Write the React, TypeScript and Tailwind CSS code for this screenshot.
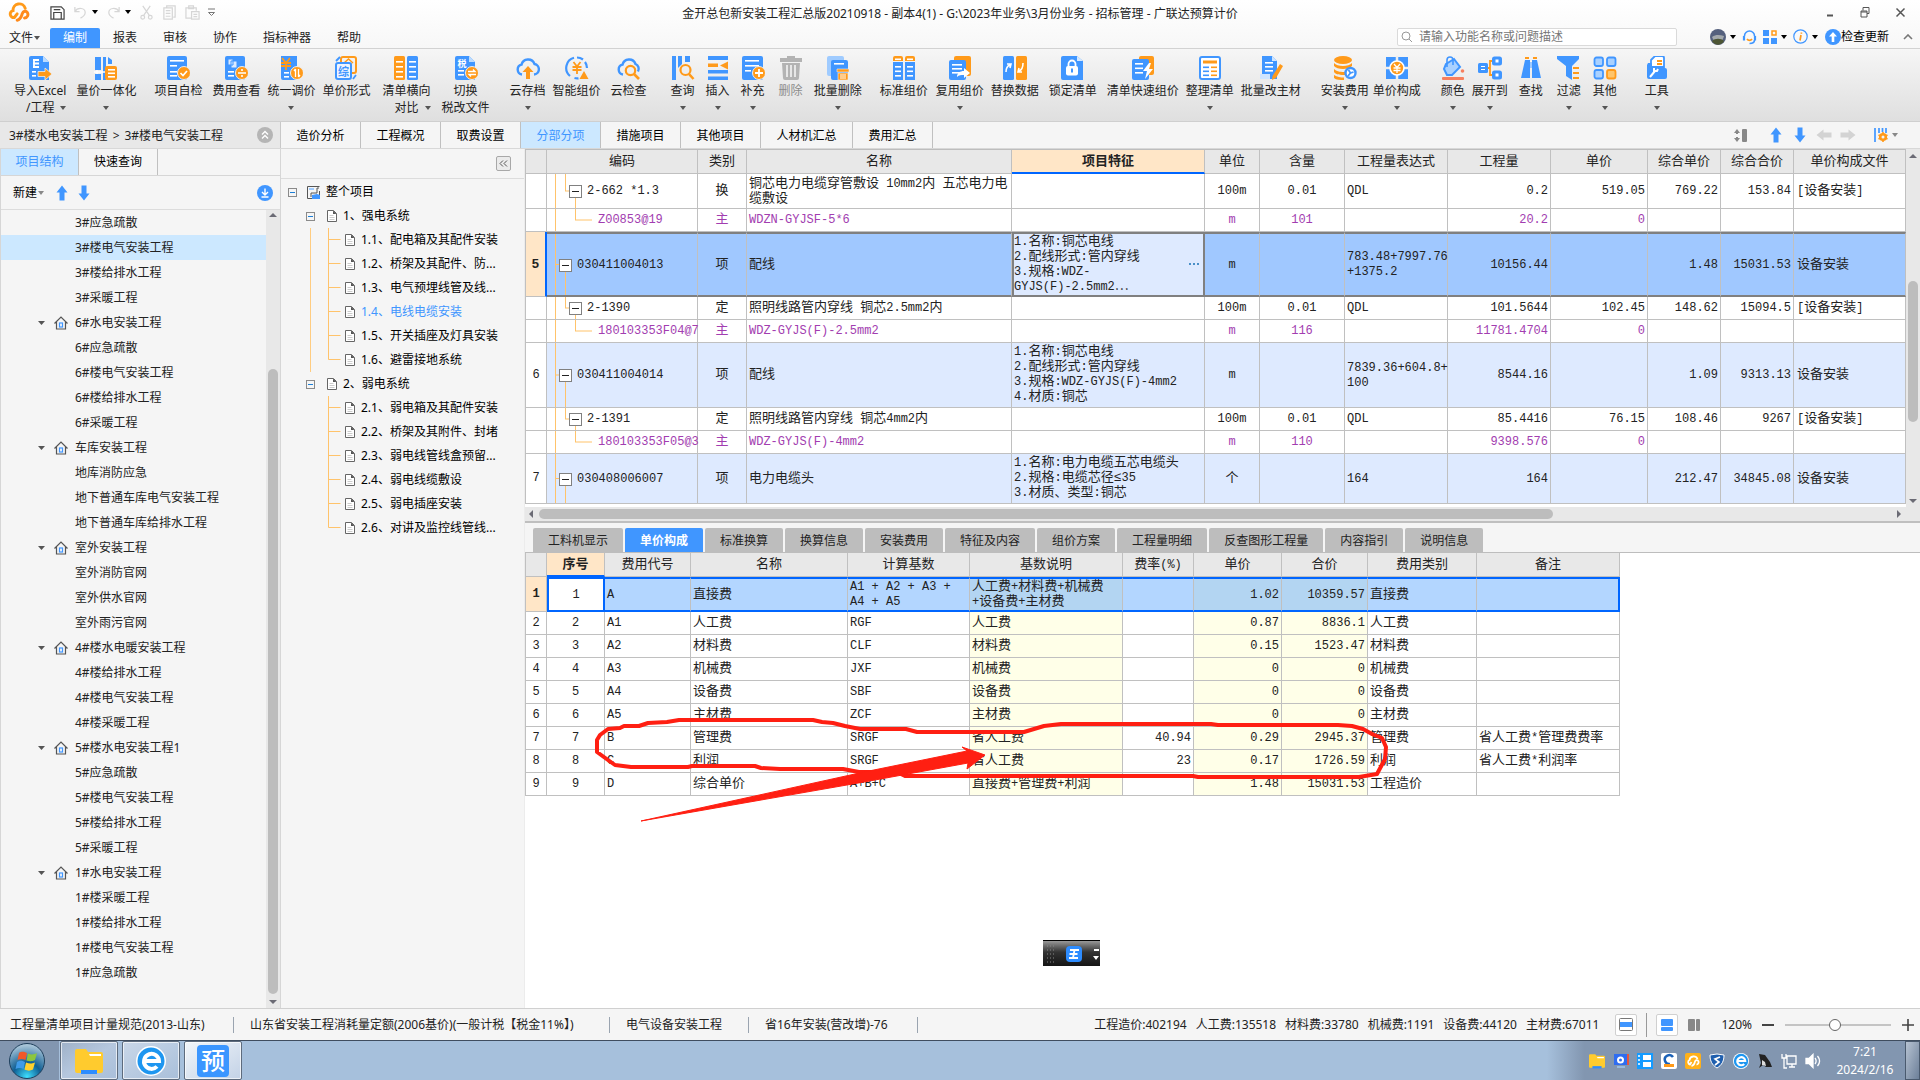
import type { ReactNode } from 'react';
import { useState } from 'react';

const B = '#4096ff';
const O = '#ff9a1a';

/* ---------- small helpers ---------- */

function Caret({ className = 'text-[#555]' }: { className?: string }) {
  return (
    <svg width="6" height="4" viewBox="0 0 6 4" className={`shrink-0 ${className}`}>
      <path d="M0 0h6L3 4z" fill="currentColor" />
    </svg>
  );
}

// grid text: half-width characters sit on a 7px raster, Chinese ones on 13px
function Cell({ text }: { text: string }) {
  return (
    <>
      {text.split(/([^\x00-\x7f]+)/).map((part, i) =>
        i % 2 ? (
          <span key={i} className="text-[13px] leading-none">
            {part}
          </span>
        ) : (
          part
        ),
      )}
    </>
  );
}

function Arrow({ dir, color = B, size = 16 }: { dir: 'up' | 'down' | 'left' | 'right'; color?: string; size?: number }) {
  const turn = { up: 0, right: 90, down: 180, left: 270 }[dir];
  return (
    <svg width={size} height={size} viewBox="0 0 16 16" className="shrink-0">
      <path d="M8 0.5l5.5 7h-3v8h-5v-8h-3z" fill={color} transform={`rotate(${turn} 8 8)`} />
    </svg>
  );
}

/* ---------- ribbon ---------- */

const coin = <circle cx="18" cy="17" r="6.5" fill={O} stroke="#eee" />;

const lines = (x: number, ys: number[], w: number, color = '#fff') =>
  ys.map((y) => <rect key={y} x={x} y={y} width={w} height="1.6" fill={color} />);

const icons: Record<string, ReactNode> = {
  excel: (
    <>
      <path d="M3 0h12l6 6v18H3a2 2 0 0 1-2-2V2a2 2 0 0 1 2-2z" fill={B} />
      <path d="M15 0l6 6h-6z" fill="#bcdcff" />
      <path d="M5 4h6M5 7.5h6M5 11h6M6 4v7" stroke="#fff" strokeWidth="1.8" />
      {lines(4, [15, 19], 4)}
      <path d="M10 15.5h7v-3.5l7 6-7 6v-3.500h-7z" fill={O} stroke="#eee" strokeWidth=".8" />
    </>
  ),
  integrate: (
    <>
      <path d="M1 1h6v13H1zM9 1h3v23H9zM1 18h6v6H1zM14 1l4 3v4h-4z" fill={B} />
      <path d="M0 16h11M3 14v4" stroke="#fff" strokeWidth="1.5" />
      <rect x="11" y="10" width="12" height="14" rx="2" fill={O} />
      {lines(14, [13, 16.5, 20], 7)}
    </>
  ),
  check: (
    <>
      <rect x="1" y="0" width="20" height="24" rx="2" fill={B} />
      {lines(4, [4], 14)}
      {lines(4, [9, 15, 19], 7)}
      {coin}
      <path d="M14.500 17l2.500 2.500 4-4.500" stroke="#fff" strokeWidth="1.700" fill="none" />
    </>
  ),
  feeView: (
    <>
      <rect x="1" y="0" width="20" height="24" rx="2" fill={B} />
      <path d="M4 3h5v6H4zM7 5h6v7H7z" fill="#dbeaff" stroke={B} />
      {lines(4, [15, 19], 6)}
      {coin}
      <path d="M14 17h8" stroke="#fff" strokeWidth="1.500" />
      <circle cx="18" cy="14" r="1.100" fill="#fff" />
      <circle cx="18" cy="20" r="1.100" fill="#fff" />
    </>
  ),
  adjust: (
    <>
      <path d="M2 0h16v24H4a2 2 0 0 1-2-2z" fill={B} />
      <path d="M3 2l4 5 4-5M2 7h10M2 10h10M7 7v7" stroke={O} strokeWidth="1.800" fill="none" />
      {lines(5, [16, 20], 5)}
      {coin}
      <path d="M16.500 13v8M15 15l1.500-2M19.500 21v-8M21 19l-1.500 2" stroke="#fff" strokeWidth="1.300" />
    </>
  ),
  priceForm: (
    <>
      <rect x="7" y="1" width="15" height="16" rx="2" fill="none" stroke={O} strokeWidth="2" />
      <path d="M10 7l4.500-4L19 7M11 8h7" stroke={O} strokeWidth="1.500" fill="none" />
      <rect x="2" y="7" width="15" height="16" rx="2" fill="#eef5ff" stroke={B} strokeWidth="2" />
      <text x="9.500" y="19.500" fontSize="11" fontWeight="700" textAnchor="middle" fill={B}>综</text>
      <path d="M2 5l4-4M19 23l3-4" stroke={B} strokeWidth="1.800" />
    </>
  ),
  compare: (
    <>
      <rect x="0" y="0" width="11" height="24" rx="1.500" fill={O} />
      <rect x="13" y="0" width="11" height="24" rx="1.500" fill={B} />
      {lines(2, [5, 10, 15, 20], 7)}
      {lines(15, [5, 10, 15, 20], 7)}
    </>
  ),
  tax: (
    <>
      <path d="M3 0h12l6 6v18H3a2 2 0 0 1-2-2V2a2 2 0 0 1 2-2z" fill={B} />
      <path d="M15 0l6 6h-6z" fill="#bcdcff" />
      <text x="8" y="10.500" fontSize="9" fontWeight="700" textAnchor="middle" fill="#fff">税</text>
      {lines(4, [14, 18], 6)}
      {coin}
      <path d="M14 15.500h7l-2-2M22 18.500h-7l2 2" stroke="#fff" strokeWidth="1.300" fill="none" />
    </>
  ),
  cloudSave: (
    <>
      <path d="M6 18.500a5 5 0 0 1-.5-9.800A6.800 6.800 0 0 1 18.500 8a5.300 5.300 0 0 1-.5 10.500" fill="none" stroke={B} strokeWidth="2.400" />
      <path d="M12 10l5.500 6H14v7h-4v-7H6.500z" fill={O} />
    </>
  ),
  smart: (
    <>
      <path d="M9 1.800a10.500 10.500 0 0 0-4 18.200M9.500 22a10 10 0 0 0 4 .3M12 1.500a10 10 0 0 1 6 2M20 6a10 10 0 0 1 2 6" fill="none" stroke={B} strokeWidth="2.200" />
      <path d="M8.500 6l3.500 4.500L15.500 6M7.500 11h9M7.500 14h9M12 11v7" stroke={O} strokeWidth="1.800" fill="none" />
      <path d="M19 15l4.500 8h-9z" fill={O} />
    </>
  ),
  cloudCheck: (
    <>
      <path d="M6 18.500a5 5 0 0 1-.5-9.800A6.800 6.800 0 0 1 18.500 8a5.300 5.300 0 0 1 2.500 7.500" fill="none" stroke={B} strokeWidth="2.400" />
      <circle cx="13.500" cy="14.500" r="4.700" fill="none" stroke={O} strokeWidth="2.200" />
      <path d="M17 18l5 5" stroke={O} strokeWidth="2.600" />
    </>
  ),
  query: (
    <>
      <path d="M1 0h4v24H1zM7 0h4v8l-4 4zM14 0h5v6l-5 0z" fill={B} />
      <circle cx="14.500" cy="14" r="5" fill="none" stroke={O} strokeWidth="2.200" />
      <path d="M18 18l4.500 5" stroke={O} strokeWidth="2.600" />
    </>
  ),
  insert: (
    <>
      <path d="M2 0h20v4H2zM2 14h20v3.500H2zM2 20.500h20V24H2z" fill={B} />
      <path d="M2 7.500h10v3.500H2zM14 9.500l8-4v8z" fill={O} />
    </>
  ),
  supplement: (
    <>
      <rect x="1" y="0" width="21" height="24" rx="2" fill={B} />
      {lines(4, [4, 9], 14)}
      {lines(4, [14], 6)}
      {coin}
      <path d="M14 17h8M18 13v8" stroke="#fff" strokeWidth="1.800" />
    </>
  ),
  trash: (
    <>
      <path d="M8 0h8v2h7v4H1V2h7zM3 7h18l-1 15a2 2 0 0 1-2 2H6a2 2 0 0 1-2-2z" fill="#b3b3b3" />
      <path d="M8 9v12M12 9v12M16 9v12" stroke="#f0f0f0" strokeWidth="1.700" />
    </>
  ),
  batchDelete: (
    <>
      <rect x="1" y="0" width="17" height="20" rx="2" fill="#9fcbff" />
      <rect x="5" y="4" width="17" height="20" rx="2" fill={B} />
      {lines(8, [7], 10)}
      <path d="M11 13h12v3H11zM12 17h10v7H12z" fill={O} stroke="#eee" strokeWidth=".6" />
      <path d="M15 18v5M17 18v5M19 18v5" stroke="#fff" />
    </>
  ),
  standard: (
    <>
      <path d="M1 6h10v18H1zM13 6h10v18H13z" fill={B} />
      <path d="M1 2a2 2 0 0 1 2-2h6a2 2 0 0 1 2 2v3H1zM13 2a2 2 0 0 1 2-2h6a2 2 0 0 1 2 2v3H13z" fill={O} />
      {lines(3, [2.500, 10, 14.500, 19], 6)}
      {lines(15, [2.500, 10, 14.500, 19], 6)}
    </>
  ),
  reuse: (
    <>
      <rect x="6" y="0" width="17" height="20" rx="2" fill={O} />
      <rect x="1" y="4" width="17" height="20" rx="2" fill={B} />
      {lines(4, [8, 12, 16], 10)}
      <path d="M9 21c0-4 3-6 7-6v-3l6 5-6 5v-3c-3 0-5 0-7 2z" fill="#fff" />
    </>
  ),
  replace: (
    <>
      <rect x="0" y="0" width="11" height="24" rx="1.500" fill={B} />
      <rect x="13" y="0" width="11" height="24" rx="1.500" fill={O} />
      <path d="M3 16c0-4 1-6 4-7M4 8l4 0-1 4M20 7c0 5-1 7-4 8M19 16h-4l1-4" stroke="#fff" strokeWidth="1.600" fill="none" />
    </>
  ),
  lock: (
    <>
      <path d="M2 0h14l6 5v19H2a2 2 0 0 1-2-2V2a2 2 0 0 1 2-2z" fill={B} />
      <path d="M16 0l6 5h-6z" fill="#d5e9ff" />
      <path d="M7.500 11V8a3.500 3.500 0 0 1 7 0v3" stroke="#fff" strokeWidth="1.800" fill="none" />
      <rect x="5" y="10" width="12" height="9.500" rx="2" fill="#fff" />
      <path d="M11 12.500v4" stroke={B} strokeWidth="2" />
    </>
  ),
  quick: (
    <>
      <rect x="8" y="0" width="15" height="19" rx="2" fill={O} />
      <rect x="1" y="3" width="17" height="21" rx="2" fill={B} />
      {lines(4, [7, 11.500, 16], 8)}
      <path d="M18 7l-6 8h4l-2 8 8-10h-4l2-6z" fill="#fff" />
    </>
  ),
  tidy: (
    <>
      <rect x="2" y="1" width="20" height="22" rx="2" fill="#fff" stroke={B} strokeWidth="2" />
      <path d="M5 4.500h14v3H5z" fill={O} />
      {lines(5, [10.500, 14.500, 18.500], 6, B)}
      {lines(13, [10.500, 14.500, 18.500], 6, O)}
    </>
  ),
  batchEdit: (
    <>
      <path d="M3 0h10l5 5v18H3z" fill={B} />
      <path d="M13 0l5 5h-5z" fill="#cfe5ff" />
      {lines(6, [6, 10, 14], 8)}
      <path d="M1 18h10v5H1z" fill="#cfe5ff" />
      <path d="M21 8l3 2-7 12-4 2 .5-4z" fill={O} />
    </>
  ),
  install: (
    <>
      <ellipse cx="10" cy="4" rx="9" ry="4" fill={O} />
      <path d="M1 7c3 4 15 4 18 0v3c-3 4-15 4-18 0zM1 13c3 3 8 3 11 3v3c-4 0-9 0-11-3zM1 19c3 2 7 2.500 10 2.500V24C7 24 3 24 1 22z" fill={O} />
      <circle cx="17.500" cy="17" r="5" fill="#fff" stroke={B} strokeWidth="2.400" />
      <path d="M15 20l2.500-3M15.500 14l2 3 3-1" stroke={B} strokeWidth="1.800" fill="none" />
    </>
  ),
  compose: (
    <>
      <path d="M1 1h22v22H1z" fill={B} />
      <path d="M12 0v24M0 12h24" stroke="#eee" strokeWidth="2.500" />
      <circle cx="12" cy="12" r="7" fill={O} stroke="#fff" strokeWidth="1.600" />
      <path d="M9 8l3 3.500L15 8M8.500 12h7M8.500 14.500h7M12 12v5" stroke="#fff" strokeWidth="1.300" fill="none" />
    </>
  ),
  color: (
    <>
      <path d="M5 8l8-5 6 8-8 8H6L3 13z" fill="#a9d1ff" stroke={B} strokeWidth="2" />
      <path d="M6 11V4a3 3 0 0 1 6 0v5" fill="none" stroke={B} strokeWidth="1.600" />
      <circle cx="21.500" cy="15" r="1.800" fill="#f77f5e" />
      <rect x="1" y="21" width="22" height="3" rx="1" fill="#f77f5e" />
    </>
  ),
  expand: (
    <>
      <path d="M8 12h4V5h4M12 12v7h4" stroke={O} strokeWidth="1.800" fill="none" />
      <rect x="0" y="7" width="10" height="10" rx="1.500" fill={B} />
      <path d="M3 10.500h4M3 13.500h4" stroke="#fff" />
      <rect x="15" y="1.500" width="8" height="7" rx="1.500" fill={B} stroke={B} strokeWidth="2" />
      <rect x="15" y="15.500" width="8" height="7" rx="1.500" fill={B} stroke={B} strokeWidth="2" />
      <path d="M17.500 3.500h3v3h-3zM17.500 17.500h3v3h-3z" fill="#fff" />
    </>
  ),
  find: (
    <>
      <path d="M6 4h5v18H2z M13 4h5l4 18h-9z" fill={B} />
      <path d="M6 2h4M14 2h4" stroke={O} strokeWidth="2" />
      <path d="M10 6h4v6h-4z" fill={B} />
      <path d="M12 5v7" stroke="#fff" />
    </>
  ),
  filter: (
    <>
      <path d="M0 0h22v3l-7 7v14l-6-4V10L0 3z" fill={B} />
      <path d="M16 12h6M16 17h6M16 22h6" stroke={O} strokeWidth="2" />
    </>
  ),
  other: (
    <>
      <rect x="1.500" y="1.500" width="8.500" height="8.500" rx="2" fill="#a9d1ff" stroke={B} strokeWidth="1.800" />
      <rect x="14" y="1.500" width="8.500" height="8.500" rx="2" fill="#a9d1ff" stroke={B} strokeWidth="1.800" />
      <rect x="1.500" y="14" width="8.500" height="8.500" rx="2" fill="#a9d1ff" stroke={B} strokeWidth="1.800" />
      <rect x="14" y="14" width="8.500" height="8.500" rx="2" fill="#ffc56b" stroke={O} strokeWidth="1.800" />
    </>
  ),
  tools: (
    <>
      <path d="M6 4l4-4h7a2 2 0 0 1 2 2v9H6z" fill="#fff" stroke={B} strokeWidth="1.800" />
      <path d="M12 5h5M12 8h5" stroke={O} strokeWidth="1.800" />
      <path d="M3 7h4v5h13a2 2 0 0 1 2 2v7a2 2 0 0 1-2 2H4a2 2 0 0 1-2-2V9z" fill={B} />
      <path d="M5 21l5-6M9 12v3l3 0 1-2" stroke="#fff" strokeWidth="2" fill="none" />
    </>
  ),
};

type Tool = { icon: string; label: string; second?: string; menu?: boolean; gap: string; off?: boolean };

const tools: Tool[] = [
  { icon: 'excel', label: '导入Excel', second: '/工程', menu: true, gap: 'ml-3.5' },
  { icon: 'integrate', label: '量价一体化', menu: true, gap: 'ml-2.5' },
  { icon: 'check', label: '项目自检', gap: 'ml-[18px]' },
  { icon: 'feeView', label: '费用查看', gap: 'ml-2.5' },
  { icon: 'adjust', label: '统一调价', menu: true, gap: 'ml-[7px]' },
  { icon: 'priceForm', label: '单价形式', gap: 'ml-[7px]' },
  { icon: 'compare', label: '清单横向', second: '对比', menu: true, gap: 'ml-3' },
  { icon: 'tax', label: '切换', second: '税改文件', gap: 'ml-[11px]' },
  { icon: 'cloudSave', label: '云存档', menu: true, gap: 'ml-5' },
  { icon: 'smart', label: '智能组价', gap: 'ml-[7px]' },
  { icon: 'cloudCheck', label: '云检查', gap: 'ml-2.5' },
  { icon: 'query', label: '查询', menu: true, gap: 'ml-6' },
  { icon: 'insert', label: '插入', menu: true, gap: 'ml-[11px]' },
  { icon: 'supplement', label: '补充', menu: true, gap: 'ml-[11px]' },
  { icon: 'trash', label: '删除', gap: 'ml-3.5', off: true },
  { icon: 'batchDelete', label: '批量删除', menu: true, gap: 'ml-[11px]' },
  { icon: 'standard', label: '标准组价', gap: 'ml-[18px]' },
  { icon: 'reuse', label: '复用组价', menu: true, gap: 'ml-2' },
  { icon: 'replace', label: '替换数据', gap: 'ml-[7px]' },
  { icon: 'lock', label: '锁定清单', gap: 'ml-2.5' },
  { icon: 'quick', label: '清单快速组价', gap: 'ml-2.5' },
  { icon: 'tidy', label: '整理清单', menu: true, gap: 'ml-[7px]' },
  { icon: 'batchEdit', label: '批量改主材', gap: 'ml-[7px]' },
  { icon: 'install', label: '安装费用', menu: true, gap: 'ml-5' },
  { icon: 'compose', label: '单价构成', menu: true, gap: 'ml-1' },
  { icon: 'color', label: '颜色', menu: true, gap: 'ml-5' },
  { icon: 'expand', label: '展开到', menu: true, gap: 'ml-[7px]' },
  { icon: 'find', label: '查找', gap: 'ml-[11px]' },
  { icon: 'filter', label: '过滤', menu: true, gap: 'ml-3.5' },
  { icon: 'other', label: '其他', menu: true, gap: 'ml-3' },
  { icon: 'tools', label: '工具', menu: true, gap: 'ml-7' },
];

function ToolButton({ tool }: { tool: Tool }) {
  return (
    <button className={`flex shrink-0 flex-col items-center leading-[17px] whitespace-nowrap ${tool.gap} ${tool.off ? 'text-[#8c8c8c]' : ''}`}>
      <svg width="24" height="24" viewBox="0 0 24 24" className="mb-0.5">
        {icons[tool.icon]}
      </svg>
      <span>{tool.label}</span>
      {tool.second ? (
        <span className="flex w-full items-center">
          <span className="flex-1" />
          <span>{tool.second}</span>
          <span className="flex flex-1 justify-end">{tool.menu && <Caret />}</span>
        </span>
      ) : (
        tool.menu && (
          <span className="flex h-[17px] items-center">
            <Caret />
          </span>
        )
      )}
    </button>
  );
}

function Ribbon() {
  return (
    <div className="flex h-[73px] shrink-0 items-start border-b border-[#cfcfcf] bg-linear-to-b from-[#f6f6f6] to-[#dfdfdf] pt-[7px]">
      {tools.map((t) => (
        <ToolButton key={t.label} tool={t} />
      ))}
    </div>
  );
}

/* ---------- title and menu ---------- */

function CloudLogo({ size = 22 }: { size?: number }) {
  return (
    <svg width={size} height={size} viewBox="0 0 24 24" className="shrink-0">
      <g fill="none" strokeWidth="3.200" strokeLinecap="round">
        <path d="M10 14l-3 4a3.800 3.800 0 0 1-1.500-7.500A6.800 6.800 0 0 1 18.800 8" stroke="#ff9a1a" />
        <path d="M10 21c4-1 4.500-4 5.500-7s4-4 5.500-1.500a3.800 3.800 0 0 1-3 6" stroke="#ff8a1a" />
      </g>
    </svg>
  );
}

function QuickIcon({ label, dark, children }: { label: string; dark?: boolean; children: ReactNode }) {
  return (
    <button aria-label={label} className={dark ? 'text-[#444]' : 'text-[#d6d6d6]'}>
      <svg width="15" height="15" viewBox="0 0 16 16" fill="none" stroke="currentColor" strokeWidth="1.300">
        {children}
      </svg>
    </button>
  );
}

const menus = ['编制', '报表', '审核', '协作', '指标神器', '帮助'];

function TopBar() {
  return (
    <header className="shrink-0 border-b border-[#d2d2d2] bg-linear-to-b from-white to-[#f7f7f7]">
      <div className="grid h-6 grid-cols-[1fr_auto_1fr]">
        <div className="flex items-center pl-2">
          <CloudLogo />
          <div className="ml-5 flex items-center">
            <QuickIcon label="保存" dark>
              <path d="M1 2h11l3 3v10H1zM4 15V8h8v7M4 5h7" />
            </QuickIcon>
          </div>
          <div className="ml-2 flex items-center gap-1">
            <QuickIcon label="撤销">
              <path d="M2 2v5h5M2 7c3-5 11-4 11 1 0 3-3 5-5 6" />
            </QuickIcon>
            <Caret className="text-black" />
          </div>
          <div className="ml-2 flex items-center gap-1">
            <QuickIcon label="恢复">
              <path d="M14 2v5H9M14 7C11 2 3 3 3 8c0 3 3 5 5 6" />
            </QuickIcon>
            <Caret className="text-black" />
          </div>
          <div className="ml-2 flex items-center gap-2">
            <QuickIcon label="剪切">
              <path d="M4 1l7 10M12 1L5 11" />
              <circle cx="4" cy="13" r="2" />
              <circle cx="12" cy="13" r="2" />
            </QuickIcon>
            <QuickIcon label="复制">
              <path d="M5 3V1h9v12h-2M2 3h9v12H2zM4 6h5M4 9h5M4 12h5" />
            </QuickIcon>
            <QuickIcon label="粘贴">
              <path d="M7 14H1V3h11v3M4 1h5v3H4zM7 7h8v8H7zM9 10h4M9 12.500h4" />
            </QuickIcon>
            <svg width="7" height="9" viewBox="0 0 7 9" stroke="#777" fill="none">
              <path d="M0 1h7M.5 4.500h6l-3 3z" />
            </svg>
          </div>
        </div>
        <h1 className="pt-1 leading-5">
          金开总包新安装工程汇总版20210918 - 副本4(1) - G:\2023年业务\3月份业务 - 招标管理 - 广联达预算计价
        </h1>
        <div className="flex items-center justify-end gap-6 pr-3.5 text-[#555]">
          <button aria-label="最小化">
            <svg width="11" height="11" viewBox="0 0 11 11"><path d="M2 8.500h6" stroke="currentColor" strokeWidth="2" /></svg>
          </button>
          <button aria-label="还原">
            <svg width="11" height="11" viewBox="0 0 11 11" fill="none" stroke="currentColor"><path d="M3 3.500v-3h6v6H7M1 4h6v6H1zM1 5h6" /></svg>
          </button>
          <button aria-label="关闭">
            <svg width="11" height="11" viewBox="0 0 11 11" stroke="currentColor" strokeWidth="1.500"><path d="M1.500 1.500l8 8M9.500 1.500l-8 8" /></svg>
          </button>
        </div>
      </div>

      <div className="flex h-6 items-end">
        <nav className="flex">
          <button className="flex h-5 w-[50px] items-center gap-px pl-[9px]">
            文件
            <Caret />
          </button>
          {menus.map((m, i) => (
            <button key={m} className={`h-5 px-[13px] ${i === 0 ? 'rounded-t-xs bg-[#4096ff] text-white' : ''}`}>
              {m}
            </button>
          ))}
        </nav>
        <div className="ml-auto flex h-6 items-center pt-px">
          <label className="mr-[33px] flex h-[18px] w-[280px] items-center gap-1.5 rounded-xs border border-[#dadada] bg-white pl-[3px]">
            <svg width="12" height="12" viewBox="0 0 12 12" fill="none" stroke="#999" aria-hidden="true">
              <circle cx="5" cy="5" r="4" />
              <path d="M8 8l3 3" />
            </svg>
            <input aria-label="搜索功能" placeholder="请输入功能名称或问题描述" className="min-w-0 flex-1 outline-none placeholder:text-[#777]" />
          </label>
          <button className="flex items-center gap-1" aria-label="账户">
            <svg width="16" height="16" viewBox="0 0 16 16">
              <circle cx="8" cy="8" r="8" fill="#55617e" />
              <path d="M2 8c4-3 8-2 12-1-1 4-3 6-6 7-3-1-5-3-6-6z" fill="#a3a9ad" />
              <path d="M2 12c3-3 9-3 12 0-3 5-9 5-12 0z" fill="#4d5634" />
            </svg>
            <Caret className="text-black" />
          </button>
          <button className="ml-1.5" aria-label="客服">
            <svg width="15" height="16" viewBox="0 0 14 16" fill="none" strokeWidth="1.600">
              <path d="M2 7a5 5 0 0 1 10 0" stroke={B} />
              <path d="M1.500 7v4.500M12.500 7v4.500" stroke={B} strokeWidth="2.200" />
              <path d="M12 11c0 2-2 3.500-5 3.500" stroke={B} />
              <path d="M4.500 10a3 3 0 0 0 5 0" stroke={O} />
            </svg>
          </button>
          <button className="ml-1.5 flex items-center gap-1" aria-label="应用">
            <svg width="14" height="14" viewBox="0 0 14 14">
              <path d="M0 0h6v6H0zM0 8h6v6H0zM8 8h6v6H8z" fill={B} />
              <rect x="9" y="1" width="4" height="4" fill="none" stroke={O} strokeWidth="1.500" />
            </svg>
            <Caret className="text-black" />
          </button>
          <button className="ml-1.5 flex items-center gap-1" aria-label="信息">
            <svg width="15" height="15" viewBox="0 0 15 15" fill="none">
              <circle cx="7.500" cy="7.500" r="6.700" stroke={B} strokeWidth="1.200" />
              <path d="M8 6l-1 5.500M8.400 3.500v1.200" stroke={O} strokeWidth="1.700" />
            </svg>
            <Caret className="text-black" />
          </button>
          <button className="ml-[7px] flex items-center text-black">
            <svg width="16" height="16" viewBox="0 0 16 16">
              <circle cx="8" cy="8" r="8" fill={B} />
              <path d="M8 3l4 4.500H9.300V13H6.700V7.500H4z" fill="#fff" />
            </svg>
            检查更新
          </button>
          <button className="mr-[7px] ml-3.5" aria-label="收起功能区">
            <svg width="10" height="6" viewBox="0 0 10 6" fill="none" stroke="#777" strokeWidth="1.600">
              <path d="M1 5l4-4 4 4" />
            </svg>
          </button>
        </div>
      </div>
    </header>
  );
}

const pages = ['造价分析', '工程概况', '取费设置', '分部分项', '措施项目', '其他项目', '人材机汇总', '费用汇总'];

function PageTabs({ page, setPage }: { page: string; setPage: (p: string) => void }) {
  return (
    <div className="flex h-[27px] shrink-0 border-b border-[#d8d8d8] bg-[#f5f5f5]">
      <div className="flex w-[281px] shrink-0 items-center border-r border-[#c8c8c8] bg-[#e8e8e8] pl-[9px]">
        <span className="pt-px">3#楼水电安装工程</span>
        <span className="mx-[5px] pt-px">&gt;</span>
        <span className="pt-px">3#楼电气安装工程</span>
        <button className="mr-[7px] ml-auto" aria-label="收起路径">
          <svg width="16" height="16" viewBox="0 0 16 16" fill="none" stroke="#fff" strokeWidth="1.400">
            <circle cx="8" cy="8" r="8" fill="#b5b5b5" stroke="none" />
            <path d="M5 7.500l3-3 3 3M5 11.500l3-3 3 3" />
          </svg>
        </button>
      </div>
      <nav className="flex">
        {pages.map((p) => (
          <button
            key={p}
            onClick={() => setPage(p)}
            className={`border-r border-[#c0c0c0] pt-0.5 ${p.length > 4 ? 'w-[92px]' : 'w-20'} ${p === page ? 'bg-[#cce8ff] text-[#4096ff]' : 'text-black'} whitespace-nowrap`}
          >
            {p}
          </button>
        ))}
      </nav>
      <div className="ml-auto flex items-center gap-2 pr-[22px]">
        <svg width="15" height="13" viewBox="0 0 15 13" className="mr-3">
          <path d="M4 0l3 4H5v1H3V4H1zM4 13l3-4H5V8H3v1H1z" fill="#888" />
          <rect x="9" y="0" width="5" height="13" rx="1" fill="#888" />
        </svg>
        <Arrow dir="up" />
        <Arrow dir="down" />
        <Arrow dir="left" color="#d3d3d3" />
        <Arrow dir="right" color="#d3d3d3" />
        <button className="ml-2.5 flex items-center gap-1" aria-label="列设置">
          <svg width="14" height="16" viewBox="0 0 14 16">
            <path d="M1 1v14M5 1v5M8.500 1v4M12 1v5" stroke={B} strokeWidth="1.700" />
            <circle cx="9" cy="10" r="2.800" fill="none" stroke={O} strokeWidth="2.600" />
            <path d="M9 5v2M9 13v2M4.500 8l2 1M11.500 11l2 1M4.500 12l2-1M11.500 9l2-1" stroke={O} strokeWidth="1.600" />
          </svg>
          <Caret className="text-[#888]" />
        </button>
      </div>
    </div>
  );
}

/* ---------- left: project structure ---------- */

const projects: { name: string; group?: boolean }[] = [
  { name: '3#应急疏散' },
  { name: '3#楼电气安装工程' },
  { name: '3#楼给排水工程' },
  { name: '3#采暖工程' },
  { name: '6#水电安装工程', group: true },
  { name: '6#应急疏散' },
  { name: '6#楼电气安装工程' },
  { name: '6#楼给排水工程' },
  { name: '6#采暖工程' },
  { name: '车库安装工程', group: true },
  { name: '地库消防应急' },
  { name: '地下普通车库电气安装工程' },
  { name: '地下普通车库给排水工程' },
  { name: '室外安装工程', group: true },
  { name: '室外消防官网' },
  { name: '室外供水官网' },
  { name: '室外雨污官网' },
  { name: '4#楼水电暖安装工程', group: true },
  { name: '4#楼给排水工程' },
  { name: '4#楼电气安装工程' },
  { name: '4#楼采暖工程' },
  { name: '5#楼水电安装工程1', group: true },
  { name: '5#应急疏散' },
  { name: '5#楼电气安装工程' },
  { name: '5#楼给排水工程' },
  { name: '5#采暖工程' },
  { name: '1#水电安装工程', group: true },
  { name: '1#楼采暖工程' },
  { name: '1#楼给排水工程' },
  { name: '1#楼电气安装工程' },
  { name: '1#应急疏散' },
];

function ScrollTip({ dir }: { dir: 'up' | 'down' | 'left' | 'right' }) {
  const d = { up: 'M0 6l4-4 4 4z', down: 'M0 2l4 4 4-4z', left: 'M6 0L2 4l4 4z', right: 'M2 0l4 4-4 4z' }[dir];
  return (
    <svg width="8" height="8" viewBox="0 0 8 8" className="shrink-0">
      <path d={d} fill="#6b6b75" />
    </svg>
  );
}

function ProjectPanel() {
  const [current, setCurrent] = useState('3#楼电气安装工程');
  return (
    <aside className="flex w-[281px] shrink-0 flex-col border-x border-[#d6d6d6] bg-[#f5f5f5]">
      <div className="flex h-[27px] shrink-0 border-b border-[#d6d6d6] text-black">
        <button className="w-[78px] border-r border-[#c0c0c0] bg-[#cce8ff] text-[#4096ff]">项目结构</button>
        <button className="w-[79px] border-r border-[#c0c0c0]">快速查询</button>
      </div>
      <div className="flex h-[34px] shrink-0 items-center border-b border-[#dcdcdc] pr-[7px] pl-3 text-black">
        <button className="flex items-center gap-px">
          新建
          <Caret className="text-[#888]" />
        </button>
        <div className="ml-2.5 flex gap-1.5">
          <Arrow dir="up" />
          <Arrow dir="down" />
        </div>
        <button className="ml-auto" aria-label="定位">
          <svg width="16" height="16" viewBox="0 0 16 16" fill="none" stroke="#fff" strokeWidth="1.400">
            <circle cx="8" cy="8" r="8" fill={B} stroke="none" />
            <path d="M8 3.500v6M5 7l3 3 3-3M4.500 12h7" />
          </svg>
        </button>
      </div>
      <div className="flex min-h-0 flex-1">
        <ul className="min-w-0 flex-1 overflow-hidden">
          {projects.map((p) => (
            <li key={p.name}>
              <button
                onClick={() => setCurrent(p.name)}
                className={`flex h-[25px] w-full items-center ${p.group ? 'pl-[37px]' : 'pl-[74px]'} ${p.name === current ? 'bg-[#cce8ff]' : ''}`}
              >
                {p.group && (
                  <>
                    <svg width="7" height="4" viewBox="0 0 7 4">
                      <path d="M0 0h7L3.500 4z" fill="#555" />
                    </svg>
                    <svg width="14" height="14" viewBox="0 0 14 14" fill="none" stroke="#555" strokeWidth="1.200" className="mr-[7px] ml-[9px]">
                      <path d="M.5 7.500L7 1l6.500 6.500M2.500 6v7h9V6" />
                      <rect x="5.500" y="7" width="3" height="4" stroke={B} />
                    </svg>
                  </>
                )}
                {p.name}
              </button>
            </li>
          ))}
        </ul>
        <div className="flex w-3.5 flex-col items-center bg-[#e8e8e8] pt-px pb-0.5">
          <ScrollTip dir="up" />
          <div className="mt-[150px] w-2.5 flex-1 rounded-full bg-[#bdbdbd]" />
          <div className="mt-1"><ScrollTip dir="down" /></div>
        </div>
      </div>
    </aside>
  );
}

/* ---------- middle: section tree ---------- */

const sections = [
  {
    name: '1、强电系统',
    items: ['1.1、配电箱及其配件安装', '1.2、桥架及其配件、防...', '1.3、电气预埋线管及线...', '1.4、电线电缆安装', '1.5、开关插座及灯具安装', '1.6、避雷接地系统'],
  },
  {
    name: '2、弱电系统',
    items: ['2.1、弱电箱及其配件安装', '2.2、桥架及其附件、封堵', '2.3、弱电线管线盒预留...', '2.4、弱电线缆敷设', '2.5、弱电插座安装', '2.6、对讲及监控线管线...'],
  },
];

function Minus() {
  return (
    <svg width="9" height="9" viewBox="0 0 9 9" fill="none" className="shrink-0">
      <rect x=".5" y=".5" width="8" height="8" stroke="#8a8a8a" />
      <path d="M2 4.500h5" stroke="#1c7fd6" />
    </svg>
  );
}

function Page() {
  return (
    <svg width="10" height="12" viewBox="0 0 10 12" fill="none" className="shrink-0">
      <path d="M.5.5h6l3 3v8h-9z" fill="#fff" stroke="#666" />
      <path d="M6 .5V4h3.500z" fill="#555" />
      <path d="M2.500 5.500h4M2.500 7.500h5M2.500 9.500h5" stroke="#ccc" />
    </svg>
  );
}

function SectionTree() {
  return (
    <section className="w-[244px] shrink-0 border-r border-[#ececec] bg-[#f5f5f5] text-black">
      <div className="mb-px flex h-[30px] items-start justify-end border-b border-[#dcdcdc] pt-[7px] pr-[13px]">
        <button aria-label="收起" className="flex h-[15px] w-[15px] items-center justify-center rounded-xs border border-[#a8a8a8] bg-[#ebebeb]">
          <svg width="9" height="7" viewBox="0 0 9 7" fill="none" stroke="#555">
            <path d="M4 .5l-3 3 3 3M8 .5l-3 3 3 3" />
          </svg>
        </button>
      </div>
      <div className="flex h-6 items-center pl-[7px]">
        <Minus />
        <svg width="13" height="13" viewBox="0 0 13 13" fill="none" className="mr-1.5 ml-2.5">
          <path d="M12.500 5V12.500H.5V.5h12" stroke="#555" />
          <path d="M2 3h5" stroke="#9fcbff" strokeWidth="2" />
          <path d="M5 9l5-1 3 1v4H5z" fill={B} />
          <path d="M4 11V7h6V2h2" stroke="#555" />
        </svg>
        整个项目
      </div>
      {sections.map((s, si) => (
        <div key={s.name}>
          <div className="flex h-6 items-center pl-[25px]">
            <Minus />
            <span className="mr-1.5 ml-3"><Page /></span>
            {s.name}
          </div>
          <ul className={si === 0 ? 'ml-[29px] border-l border-[#ffcc80]' : 'ml-[29px] border-l border-transparent'}>
            {s.items.map((it, i) => (
              <li key={it} className="flex h-6 items-center pl-[17px]">
                <svg width="13" height="24" className="shrink-0" stroke="#ffc36b">
                  <path d={i === s.items.length - 1 ? 'M.5 0v11.500h12' : 'M.5 0v24M.5 11.500h12'} fill="none" />
                </svg>
                <button className={`flex items-center gap-1.5 pl-1 whitespace-nowrap ${it.startsWith('1.4') ? 'text-[#4096ff]' : ''}`}>
                  <Page />
                  {it}
                </button>
              </li>
            ))}
          </ul>
        </div>
      ))}
    </section>
  );
}

/* ---------- bill grid ---------- */

type Bill = {
  kind: 'item' | 'sub' | 'mat';
  h: string;
  no?: string;
  code: string;
  type: string;
  name: string[];
  feature?: string[];
  unit: string;
  content?: string;
  expr?: string[];
  qty: string;
  price?: string;
  unitPrice?: string;
  total?: string;
  file?: string;
};

const bills: Bill[] = [
  { kind: 'sub', h: 'h-[35px]', code: '2-662 *1.3', type: '换', name: ['铜芯电力电缆穿管敷设 10mm2内 五芯电力电', '缆敷设'], unit: '100m', content: '0.01', expr: ['QDL'], qty: '0.2', price: '519.05', unitPrice: '769.22', total: '153.84', file: '[设备安装]' },
  { kind: 'mat', h: 'h-[23px]', code: 'Z00853@19', type: '主', name: ['WDZN-GYJSF-5*6'], unit: 'm', content: '101', qty: '20.2', price: '0' },
  { kind: 'item', h: 'h-[65px]', no: '5', code: '030411004013', type: '项', name: ['配线'], feature: ['1.名称:铜芯电线', '2.配线形式:管内穿线', '3.规格:WDZ-', 'GYJS(F)-2.5mm2⋯'], unit: 'm', expr: ['783.48+7997.76', '+1375.2'], qty: '10156.44', unitPrice: '1.48', total: '15031.53', file: '设备安装' },
  { kind: 'sub', h: 'h-[23px]', code: '2-1390', type: '定', name: ['照明线路管内穿线 铜芯2.5mm2内'], unit: '100m', content: '0.01', expr: ['QDL'], qty: '101.5644', price: '102.45', unitPrice: '148.62', total: '15094.5', file: '[设备安装]' },
  { kind: 'mat', h: 'h-[23px]', code: '180103353F04@7', type: '主', name: ['WDZ-GYJS(F)-2.5mm2'], unit: 'm', content: '116', qty: '11781.4704', price: '0' },
  { kind: 'item', h: 'h-[65px]', no: '6', code: '030411004014', type: '项', name: ['配线'], feature: ['1.名称:铜芯电线', '2.配线形式:管内穿线', '3.规格:WDZ-GYJS(F)-4mm2', '4.材质:铜芯'], unit: 'm', expr: ['7839.36+604.8+', '100'], qty: '8544.16', unitPrice: '1.09', total: '9313.13', file: '设备安装' },
  { kind: 'sub', h: 'h-[23px]', code: '2-1391', type: '定', name: ['照明线路管内穿线 铜芯4mm2内'], unit: '100m', content: '0.01', expr: ['QDL'], qty: '85.4416', price: '76.15', unitPrice: '108.46', total: '9267', file: '[设备安装]' },
  { kind: 'mat', h: 'h-[23px]', code: '180103353F05@3', type: '主', name: ['WDZ-GYJS(F)-4mm2'], unit: 'm', content: '110', qty: '9398.576', price: '0' },
  { kind: 'item', h: 'h-[50px]', no: '7', code: '030408006007', type: '项', name: ['电力电缆头'], feature: ['1.名称:电力电缆五芯电缆头', '2.规格:电缆芯径≤35', '3.材质、类型:铜芯'], unit: '个', expr: ['164'], qty: '164', unitPrice: '212.47', total: '34845.08', file: '设备安装' },
];

const guides = {
  item: [['8.5', '0', '8.5', '100%'], ['8', '50%', '14', '50%'], ['18.5', '50%', '18.5', '100%']],
  sub: [['8.5', '0', '8.5', '100%'], ['18.5', '0', '18.5', '50%'], ['18', '50%', '24', '50%'], ['28.5', '50%', '28.5', '100%']],
  mat: [['8.5', '0', '8.5', '100%'], ['28.5', '0', '28.5', '50%'], ['28', '50%', '45', '50%']],
};

const billHeads = ['编码', '类别', '名称', '项目特征', '单位', '含量', '工程量表达式', '工程量', '单价', '综合单价', '综合合价', '单价构成文件'];

const gridFont = "font-['Liberation_Mono','Noto_Sans_CJK_SC',monospace] text-[12px] leading-[15px]";

function Lines({ rows }: { rows?: string[] }) {
  return rows?.map((r) => (
    <div key={r} className="h-[15px] whitespace-nowrap">
      <Cell text={r} />
    </div>
  ));
}

function BillRow({ row }: { row: Bill }) {
  const sel = row.no === '5';
  const edge = sel ? 'border-b-2 border-b-[#808080] border-t-2 border-t-[#808080]' : 'border-b';
  const box = `border-r border-[#c0c0c0] p-0 ${edge}`;
  const td = `${box} pt-px`;
  const bg = sel ? 'bg-[#a0c8ff]' : row.kind === 'item' ? 'bg-[#deeaff]' : 'bg-white';
  const ink = row.kind === 'mat' ? 'text-[#a23db0]' : 'text-[#222]';
  const indent = { item: 'pl-3', sub: 'pl-[22px]', mat: 'pl-[51px]' }[row.kind];
  return (
    <tr className={`${row.h} ${bg} ${ink}`}>
      <td className={`border-r border-b border-l border-[#c0c0c0] p-0 text-center ${sel ? 'border-r-2 border-r-[#0066ff] bg-[#ffe6c7] text-[13px] font-bold' : 'bg-white'}`}>{row.no}</td>
      <td className={`relative ${td}`}>
        <svg className="absolute inset-0 h-full w-full" stroke="#ffc36b">
          {guides[row.kind].map(([x1, y1, x2, y2], i) => (
            <line key={i} x1={x1} y1={y1} x2={x2} y2={y2} />
          ))}
        </svg>
        <div className={`relative flex items-center whitespace-nowrap ${indent}`}>
          {row.kind !== 'mat' && (
            <svg width="13" height="13" viewBox="0 0 13 13" className="mr-[5px] shrink-0">
              <rect x=".5" y=".5" width="12" height="12" fill="#fff" stroke="#808080" />
              <path d="M3 6.500h7" stroke="#222" />
            </svg>
          )}
          {row.code}
        </div>
      </td>
      <td className={`text-center ${td}`}><Cell text={row.type} /></td>
      <td className={`${td} pl-0.5`}><Lines rows={row.name} /></td>
      <td className={`${box} ${sel ? 'border-r-2 border-l-2 border-r-[#808080] border-l-[#808080] bg-[#deeaff]' : 'pl-0.5'}`}>
        <div className="flex items-center">
          <div className="flex-1"><Lines rows={row.feature} /></div>
          {sel && (
            <button aria-label="编辑特征" className="mr-1">
              <svg width="10" height="3" viewBox="0 0 10 3"><path d="M0 0h2v2H0zM4 0h2v2H4zM8 0h2v2H8z" fill="#4a90c8" /></svg>
            </button>
          )}
        </div>
      </td>
      <td className={`text-center ${td}`}><Cell text={row.unit} /></td>
      <td className={`text-center ${td}`}>{row.content}</td>
      <td className={`${td} pl-0.5`}><Lines rows={row.expr} /></td>
      <td className={`text-right ${td} pr-0.5`}>{row.qty}</td>
      <td className={`text-right ${td} pr-0.5`}>{row.price}</td>
      <td className={`text-right ${td} pr-0.5`}>{row.unitPrice}</td>
      <td className={`text-right ${td} pr-0.5`}>{row.total}</td>
      <td className={`${td} pl-[3px]`}><Cell text={row.file ?? ''} /></td>
    </tr>
  );
}

function BillGrid() {
  return (
    <div className="shrink-0">
      <div className="flex h-[358px]">
        <div className="min-w-0 flex-1 overflow-hidden bg-white">
          <table className={`w-full table-fixed border-separate border-spacing-0 border-t border-[#bdbdbd] ${gridFont}`}>
            <colgroup>
              <col className="w-[22px]" />
              <col className="w-[151px]" />
              <col className="w-[49px]" />
              <col className="w-[265px]" />
              <col className="w-[193px]" />
              <col className="w-[55px]" />
              <col className="w-[85px]" />
              <col className="w-[103px]" />
              <col className="w-[103px]" />
              <col className="w-[97px]" />
              <col className="w-[73px]" />
              <col className="w-[73px]" />
              <col />
            </colgroup>
            <thead>
              <tr className="h-6 bg-[#e8e8e8] text-[#222]">
                <th className="border-r border-b border-l border-[#c0c0c0] p-0" aria-label="行号" />
                {billHeads.map((h) => (
                  <th
                    key={h}
                    className={`border-r border-[#c0c0c0] p-0 text-[13px] whitespace-nowrap ${h === '项目特征' ? 'border-b-2 border-b-[#0066ff] bg-[#ffe6c7] font-bold' : 'border-b font-normal'}`}
                  >
                    {h}
                  </th>
                ))}
              </tr>
            </thead>
            <tbody>
              {bills.map((b) => (
                <BillRow key={b.code} row={b} />
              ))}
            </tbody>
          </table>
        </div>
        <div className="flex w-3.5 shrink-0 flex-col items-center bg-[#e8e8e8] pt-[3px] pb-0.5">
          <ScrollTip dir="up" />
          <div className="mt-[121px] h-[141px] w-2.5 rounded-full bg-[#bdbdbd]" />
          <div className="mt-auto"><ScrollTip dir="down" /></div>
        </div>
      </div>
      <div className="flex h-3.5 items-center bg-[#e8e8e8] pr-[17px] pl-0.5">
        <ScrollTip dir="left" />
        <div className="ml-1 h-2.5 w-[1014px] rounded-full bg-[#bdbdbd]" />
        <div className="ml-auto"><ScrollTip dir="right" /></div>
      </div>
    </div>
  );
}

/* ---------- detail pane ---------- */

const detailTabs = ['工料机显示', '单价构成', '标准换算', '换算信息', '安装费用', '特征及内容', '组价方案', '工程量明细', '反查图形工程量', '内容指引', '说明信息'];

const feeHeads = ['费用代号', '名称', '计算基数', '基数说明', '费率(%)', '单价', '合价', '费用类别', '备注'];

const fees = [
  ['A', '直接费', 'A1 + A2 + A3 + A4 + A5', '人工费+材料费+机械费+设备费+主材费', '', '1.02', '10359.57', '直接费', ''],
  ['A1', '人工费', 'RGF', '人工费', '', '0.87', '8836.1', '人工费', ''],
  ['A2', '材料费', 'CLF', '材料费', '', '0.15', '1523.47', '材料费', ''],
  ['A3', '机械费', 'JXF', '机械费', '', '0', '0', '机械费', ''],
  ['A4', '设备费', 'SBF', '设备费', '', '0', '0', '设备费', ''],
  ['A5', '主材费', 'ZCF', '主材费', '', '0', '0', '主材费', ''],
  ['B', '管理费', 'SRGF', '省人工费', '40.94', '0.29', '2945.37', '管理费', '省人工费*管理费费率'],
  ['C', '利润', 'SRGF', '省人工费', '23', '0.17', '1726.59', '利润', '省人工费*利润率'],
  ['D', '综合单价', 'A+B+C', '直接费+管理费+利润', '', '1.48', '15031.53', '工程造价', ''],
];

function FeeTable() {
  return (
    <table className={`w-[1095px] table-fixed border-separate border-spacing-0 text-[#222] ${gridFont}`}>
      <colgroup>
        <col className="w-[22px]" />
        <col className="w-[58px]" />
        <col className="w-[86px]" />
        <col className="w-[157px]" />
        <col className="w-[122px]" />
        <col className="w-[153px]" />
        <col className="w-[71px]" />
        <col className="w-[88px]" />
        <col className="w-[86px]" />
        <col className="w-[109px]" />
        <col className="w-[143px]" />
      </colgroup>
      <thead>
        <tr className="h-6 bg-[#e8e8e8]">
          <th className="border-r border-b border-l border-[#c0c0c0] p-0" aria-label="行号" />
          <th className="border-r border-b-2 border-[#c0c0c0] border-b-[#0066ff] bg-[#ffe6c7] p-0 pt-px text-[13px] font-bold">序号</th>
          {feeHeads.map((h) => (
            <th key={h} className="border-r border-b border-[#c0c0c0] p-0 pt-px font-normal whitespace-nowrap">
              <Cell text={h} />
            </th>
          ))}
        </tr>
      </thead>
      <tbody>
        {fees.map((f, r) => {
          const sel = r === 0;
          return (
            <tr key={f[0]} className={sel ? 'h-[35px]' : 'h-[23px]'}>
              <td className={`border-r border-b border-l border-[#c0c0c0] p-0 pt-px text-center ${sel ? 'bg-[#ffe6c7] font-bold' : ''}`}>{r + 1}</td>
              <td className={`p-0 pt-px text-center ${sel ? 'border-2 border-[#0066ff]' : 'border-r border-b border-[#c0c0c0]'}`}>{r + 1}</td>
              {f.map((v, c) => {
                const num = c >= 4 && c <= 6;
                const soft = c === 3 || c === 5 || c === 6;
                const bg = sel ? (soft ? 'bg-[#b3d5f2]' : 'bg-[#b3d6ff]') : soft ? 'bg-[#ffffe8]' : 'bg-white';
                const edge = sel ? `border-y-2 border-y-[#0066ff] ${c === 8 ? 'border-r-2 border-r-[#0066ff]' : ''}` : 'border-b';
                return (
                  <td key={c} className={`border-r border-[#c0c0c0] p-0 pt-px ${edge} ${bg} ${num ? 'pr-0.5 text-right' : 'pl-0.5'}`}>
                    <Cell text={v} />
                  </td>
                );
              })}
            </tr>
          );
        })}
      </tbody>
    </table>
  );
}

// hand-drawn review marks over the management fee and profit rows
function Marks() {
  return (
    <svg width="880" height="280" viewBox="0 0 880 280" className="pointer-events-none absolute top-px left-0">
      <path
        d="M72 186l3-5 8-6 12-1 4-2h15l9-3 19-1 12-2h134l9 2 11 1 12 3 15 3h46l11 3h107l10-3 10-3 17-2h150l7 1h120l14 1 11 3 9 5 10 4 4 9-1 12-8 15-18 3H673l-5-1H380l-8-4h-38l-16-3h-63l-19-1-6-2h-63l-4 1h-57l-16-2-18-13z"
        fill="none"
        stroke="#ff1f12"
        strokeWidth="4"
        strokeLinejoin="round"
      />
      <path d="M116 267l223-49 103-21-5-4 23 8-18 14 1-6-104 19z" fill="#ff1f12" stroke="#ff1f12" strokeLinejoin="round" />
    </svg>
  );
}

function DetailPane() {
  const [tab, setTab] = useState('单价构成');
  return (
    <div className="flex min-h-0 flex-1 flex-col border-t-2 border-[#bfbfbf] bg-white">
      <div className="flex h-[30px] shrink-0 items-end gap-0.5 border-b border-[#bdbdbd] bg-[#f5f5f5] pl-2">
        {detailTabs.map((t) => (
          <button
            key={t}
            onClick={() => setTab(t)}
            className={`h-6 rounded-t-xs px-[15px] pt-px whitespace-nowrap ${t === tab ? 'bg-[#4096ff] font-bold text-white' : 'bg-[#bdbdbd]'}`}
          >
            {t}
          </button>
        ))}
      </div>
      <div className="relative flex-1">
        <FeeTable />
        <Marks />
        <div className="absolute bottom-[42px] left-[518px] flex h-[26px] w-[57px] items-center gap-[11px] border-t border-black bg-linear-to-b from-[#999] via-[#333] via-45% to-[#151515] pl-1">
          <svg width="8" height="18" viewBox="0 0 8 18" stroke="#888" strokeDasharray="1 2">
            <path d="M0 1h8M0 5h8M0 9h8M0 13h8M0 17h8" />
          </svg>
          <svg width="16" height="16" viewBox="0 0 16 16">
            <rect width="16" height="16" rx="4" fill="#2d8cff" />
            <path d="M4 4h9M3.500 8h8M3 12h9M8.500 4l-1.500 8" stroke="#fff" strokeWidth="1.800" />
          </svg>
          <svg width="7" height="14" viewBox="0 0 7 14" fill="#fff">
            <path d="M1 2h5v2H1zM0 9h6l-3 4z" />
          </svg>
        </div>
      </div>
    </div>
  );
}

/* ---------- bottom bars ---------- */

const totals = ['工程造价:402194', '人工费:135518', '材料费:33780', '机械费:1191', '设备费:44120', '主材费:67011'];

function StatusBar() {
  const [zoom, setZoom] = useState(47);
  return (
    <footer className="flex h-8 shrink-0 items-center border-t border-[#d0d0d0] bg-[#f5f5f5] whitespace-nowrap">
      <span className="w-[233px] pl-2.5">工程量清单项目计量规范(2013-山东)</span>
      <span className="w-[376px] border-l border-[#9aa4b0] pl-4">山东省安装工程消耗量定额(2006基价)(一般计税【税金11%】)</span>
      <span className="w-[139px] border-l border-[#9aa4b0] pl-4">电气设备安装工程</span>
      <span className="w-[170px] border-x border-[#9aa4b0] pl-4">省16年安装(营改增)-76</span>
      <div className="ml-auto flex gap-[9px]">
        {totals.map((t) => (
          <span key={t}>{t}</span>
        ))}
      </div>
      <button aria-label="单窗格" className="ml-4 flex h-[22px] w-[22px] items-center justify-center rounded-xs border border-[#d0d0d0] bg-white">
        <svg width="14" height="13" viewBox="0 0 14 13">
          <rect x=".5" y=".5" width="13" height="12" rx="1" fill="#fff" stroke="#777" />
          <path d="M1 4h12v5H1z" fill={B} />
        </svg>
      </button>
      <div className="mx-[9px] h-6 border-l border-[#999]" />
      <button aria-label="上下窗格" className="flex h-[22px] w-[22px] items-center justify-center rounded-xs border border-[#d0d0d0] bg-white">
        <svg width="12" height="12" viewBox="0 0 12 12" fill={B}>
          <rect width="12" height="7" rx="1" />
          <rect y="8" width="12" height="4" rx="1" />
        </svg>
      </button>
      <button aria-label="左右窗格" className="ml-2.5">
        <svg width="12" height="12" viewBox="0 0 12 12" fill="#888">
          <rect width="7" height="12" rx="1" />
          <rect x="8" width="4" height="12" rx="1" />
        </svg>
      </button>
      <span className="ml-[21px]">120%</span>
      <button aria-label="缩小" className="ml-2.5 h-0.5 w-3 bg-[#444]" />
      <input
        type="range"
        aria-label="缩放"
        value={zoom}
        onChange={(e) => setZoom(Number(e.target.value))}
        className="mx-[11px] h-3 w-[106px] appearance-none bg-transparent [&::-webkit-slider-runnable-track]:h-0.5 [&::-webkit-slider-runnable-track]:bg-[#c4c4c4] [&::-webkit-slider-thumb]:-mt-[5px] [&::-webkit-slider-thumb]:h-3 [&::-webkit-slider-thumb]:w-3 [&::-webkit-slider-thumb]:appearance-none [&::-webkit-slider-thumb]:rounded-full [&::-webkit-slider-thumb]:border [&::-webkit-slider-thumb]:border-[#666] [&::-webkit-slider-thumb]:bg-white"
      />
      <button aria-label="放大" className="mr-1.5">
        <svg width="12" height="12" viewBox="0 0 12 12"><path d="M0 6h12M6 0v12" stroke="#444" strokeWidth="1.600" /></svg>
      </button>
    </footer>
  );
}

function Folder({ size }: { size: number }) {
  return (
    <svg width={size} height={size} viewBox="0 0 28 28">
      <path d="M0 4a2 2 0 0 1 2-2h9l2 3h13a2 2 0 0 1 2 2v17a2 2 0 0 1-2 2H2a2 2 0 0 1-2-2z" fill="#ffcb2e" />
      <path d="M14 7h12v2H15z" fill="#fff" />
      <path d="M6 23h16v4H6z" fill="#2d8cff" />
    </svg>
  );
}

function Browser({ size }: { size: number }) {
  return (
    <svg width={size} height={size} viewBox="0 0 30 30">
      <circle cx="15" cy="15" r="15" fill="#fff" />
      <circle cx="15" cy="15" r="13.500" fill="#1e96f0" />
      <path d="M8 15h15a7.500 7.500 0 1 0-2 5.500" fill="none" stroke="#fff" strokeWidth="4" />
    </svg>
  );
}

function TaskBar() {
  const app = 'flex h-[39px] w-[58px] items-center justify-center rounded-xs border border-[#5d6b7d] shadow-[inset_0_0_0_1px_#ffffffaa]';
  return (
    <div className="flex h-10 shrink-0 border-t border-[#3f4d5f] bg-[#a6c0dc]">
      <div className="flex w-[59px] items-center bg-[#8296b0] pl-2">
        <button aria-label="开始">
          <svg width="38" height="38" viewBox="0 0 38 38">
            <defs>
              <radialGradient id="orb" cx=".5" cy=".95" r=".9">
                <stop offset="0" stopColor="#3fe0ff" />
                <stop offset=".45" stopColor="#0f5f94" />
                <stop offset="1" stopColor="#a8c4d8" />
              </radialGradient>
            </defs>
            <circle cx="19" cy="19" r="17.500" fill="url(#orb)" stroke="#1f3f5c" />
            <path d="M11 11c3-2 5-1 8 0l-1.500 7c-3-1.500-5-1.500-8 0z" fill="#f0582a" />
            <path d="M20 11.500c3 1 5 1.500 9-.5l-2 7c-3 1.500-5 1.500-8.500.500z" fill="#8cc63f" />
            <path d="M9 20c3-2 5-1.500 8 0l-1.500 7c-3-1.500-5-1.500-8 0z" fill="#3f9be8" />
            <path d="M18 20.500c3 1 5 1.500 9 0l-2 7c-3 1.500-5 1.500-8.500 0z" fill="#ffd02e" />
          </svg>
        </button>
      </div>
      <div className="flex gap-1 pl-px">
        <button aria-label="资源管理器" className={`${app} bg-linear-to-br from-[#9fb1c8] via-[#b5c7de] to-[#a9bfda]`}><Folder size={28} /></button>
        <button aria-label="浏览器" className={`${app} bg-linear-to-br from-[#c9d7e8] to-[#a9bfda]`}><Browser size={30} /></button>
        <button className={`${app} bg-linear-to-br from-[#f2f6fa] to-[#c3d2e6]`}>
          <span className="flex h-8 w-8 items-center justify-center rounded-sm bg-[#3b96ff] text-[24px] font-medium text-white">预</span>
        </button>
      </div>
      <div className="ml-auto flex items-center bg-linear-to-r from-transparent to-[#8296b0] to-10% pl-[42px] text-white">
        <div className="flex items-center gap-2">
          <Folder size={16} />
          <svg width="16" height="16" viewBox="0 0 16 16"><path d="M1 1h13v11H1z" fill="#2f6df0" /><path d="M14 1h2v11h-2z" fill="#e8563c" /><circle cx="7.500" cy="7" r="3.500" fill="#fff" /><circle cx="7.500" cy="7" r="1.500" fill="#2f6df0" /><path d="M4 14h8" stroke="#9bd" strokeWidth="2" /></svg>
          <svg width="16" height="16" viewBox="0 0 16 16"><rect width="16" height="16" fill="#149bff" /><path d="M2 2v12" stroke="#fff" strokeWidth="1.500" strokeDasharray="2 2" /><path d="M6 2h8v5H6zM6 9h8v5H6z" fill="#fff" /></svg>
          <svg width="16" height="16" viewBox="0 0 16 16"><rect width="16" height="16" rx="2" fill="#fff" /><path d="M12 4a4.500 4.500 0 1 0-3 7" fill="none" stroke="#1b62b8" strokeWidth="2.500" /><path d="M3 11h10v3H3z" fill="#ff9a1a" /></svg>
          <span className="flex rounded-xs bg-[#ffb11a]">
            <svg width="16" height="16" viewBox="0 0 16 16" fill="none" stroke="#fff" strokeWidth="1.800"><path d="M6.500 9l-1.500 2.500a2.400 2.400 0 0 1-.5-4.500 4.200 4.200 0 0 1 8-1M6.500 13c3-.5 3-3 3.500-4.500s3-2 3.500 0-1 3-2 3" /></svg>
          </span>
          <svg width="16" height="16" viewBox="0 0 16 16"><path d="M1 2l7-1 7 1c0 6-2 10-7 13C3 12 1 8 1 2z" fill="#1f5fae" stroke="#fff" /><path d="M11 4L6 6l4 3-4 3" stroke="#fff" strokeWidth="1.600" fill="none" /></svg>
          <Browser size={16} />
          <svg width="16" height="16" viewBox="0 0 16 16"><path d="M2 1l6 1 5 7 2 5H9l-3-2-4 3 2-5z" fill="#222" /><path d="M5 7l3 2 1 4-4-1z" fill="#ddd" /></svg>
          <svg width="16" height="16" viewBox="0 0 16 16" fill="none" stroke="#fff" strokeWidth="1.300"><path d="M6 3h9v8H6zM8 14h6M11 11v3M1 1v4h4V1M3 5v10h3" /></svg>
          <svg width="16" height="16" viewBox="0 0 16 16" fill="none" stroke="#fff" strokeWidth="1.300"><path d="M1 5.500h3l4-4v13l-4-4H1z" fill="#fff" /><path d="M10 5c1.500 2 1.500 4 0 6M12.500 3c2.500 3 2.500 7 0 10" /></svg>
        </div>
        <div className="mr-1 ml-2 w-[72px] text-center leading-[18px]">
          <div>7:21</div>
          <div>2024/2/16</div>
        </div>
        <button aria-label="显示桌面" className="h-full w-[15px] border border-[#4a5a6e] bg-linear-to-br from-[#b7c3d2] to-[#6d8099]" />
      </div>
    </div>
  );
}

export default function App() {
  const [page, setPage] = useState('分部分项');
  return (
    <div className="flex h-screen flex-col overflow-hidden bg-[#f5f5f5] font-['Noto_Sans','Noto_Sans_CJK_SC',sans-serif] text-[12px] leading-4 text-[#222]">
      <TopBar />
      <Ribbon />
      <PageTabs page={page} setPage={setPage} />
      <main className="flex min-h-0 flex-1">
        <ProjectPanel />
        <SectionTree />
        <div className="flex min-w-0 flex-1 flex-col">
          <BillGrid />
          <DetailPane />
        </div>
      </main>
      <StatusBar />
      <TaskBar />
    </div>
  );
}
